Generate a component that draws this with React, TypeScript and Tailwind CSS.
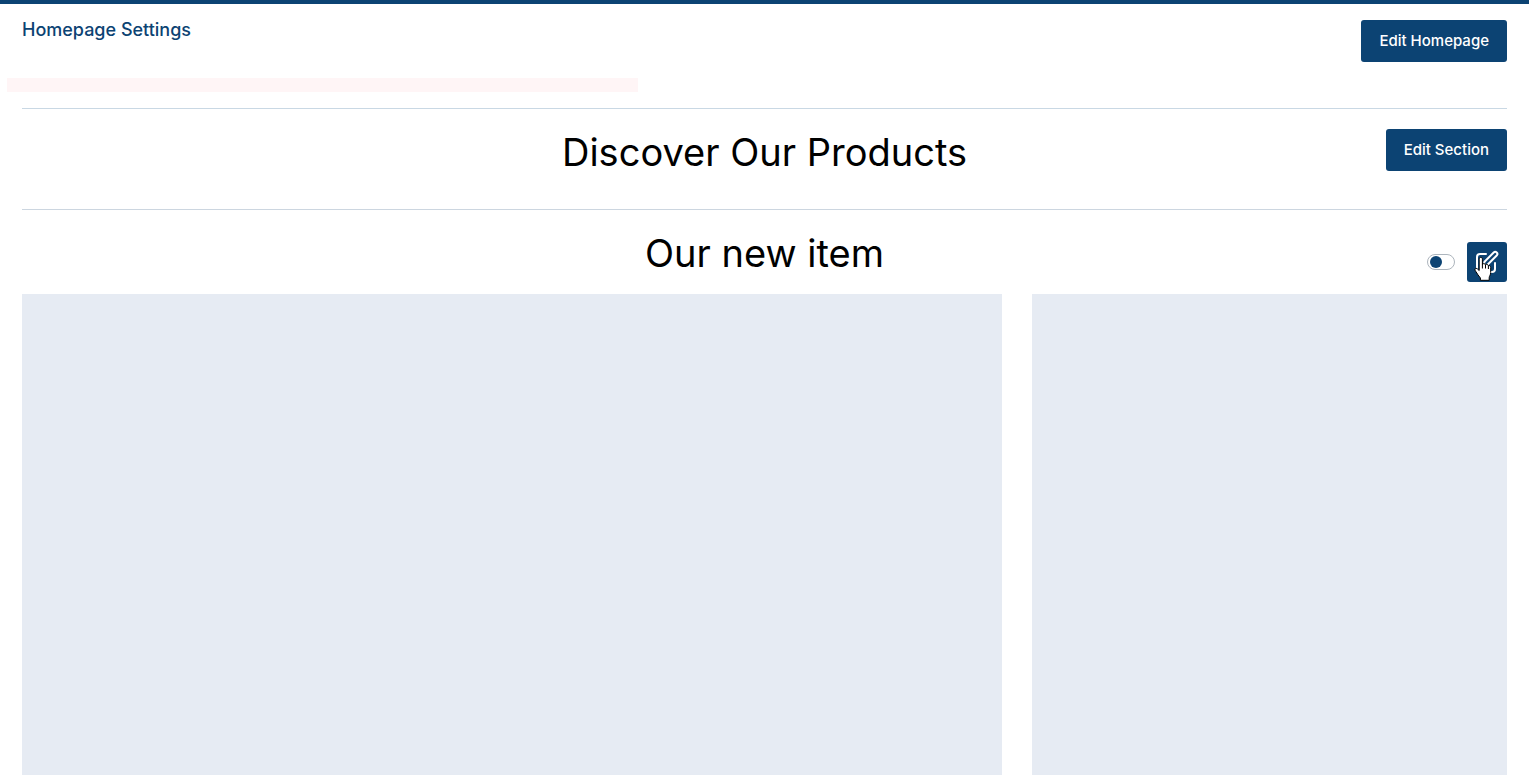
import React, { useState } from "react";

const PencilSquareIcon = () => (
  <svg
    className="size-6"
    viewBox="0 0 24 24"
    fill="none"
    stroke="currentColor"
    strokeWidth="2"
    strokeLinecap="round"
    strokeLinejoin="round"
    aria-hidden="true"
  >
    <path d="M11 4H5a3 3 0 0 0-3 3v12a3 3 0 0 0 3 3h12a3 3 0 0 0 3-3v-6" />
    <path d="M18.700 2.500a2.100 2.100 0 0 1 3 3L12.500 14.700 8.500 16l1-4.200z" />
  </svg>
);

const HandCursor = () => (
  <svg
    className="pointer-events-none absolute top-[14px] left-[6px] h-[26px] w-[20px]"
    viewBox="0 0 20 26"
    aria-hidden="true"
  >
    <path
      d="M6.200 3.200c0-2.400 3.200-2.400 3.200 0v5c.8-.9 2.900-.7 3.100.6 1-.7 2.700-.4 2.900 1 1.100-.5 2.300.1 2.300 1.700v5c0 2.500-1.500 3.500-1.500 5.200v2.600H7.400v-2.300c-1.900-1.800-3-4.400-4.700-6.700-1.500-1.900-.4-3.700 1.500-2.600l2 1.800z"
      fill="#fff"
      stroke="#000"
      strokeLinejoin="round"
    />
    <path d="M9.400 8v4.500M12.500 9v3.500M15.400 10v3" stroke="#000" fill="none" />
  </svg>
);

const EditButton = ({ children }: { children: React.ReactNode }) => (
  <button
    type="button"
    className="h-[42px] shrink-0 rounded-[3px] bg-[#0c4373] px-[18px] text-[15px] font-medium whitespace-nowrap text-white hover:bg-[#09355c]"
  >
    {children}
  </button>
);

export default function App() {
  const [enabled, setEnabled] = useState(false);

  return (
    <div className="flex min-h-screen flex-col border-t-4 border-[#0c4373] bg-white px-[22px] font-['Inter',sans-serif]">
      <header className="flex items-start justify-between pt-4">
        <h1 className="text-lg leading-5 font-medium text-[#0c4373]">Homepage Settings</h1>
        <EditButton>Edit Homepage</EditButton>
      </header>

      {/* empty message row */}
      <div className="-mx-[15px] mt-4 mb-4">
        <div className="h-[14px] w-5/12 bg-[#fff5f6]" />
      </div>

      <section className="grid grid-cols-[1fr_auto_1fr] items-start border-t border-[#c9d8e4] pt-5 pb-[34px]">
        <h2 className="col-start-2 text-[38px] leading-[46px] font-normal text-black">
          Discover Our Products
        </h2>
        <div className="flex justify-end">
          <EditButton>Edit Section</EditButton>
        </div>
      </section>

      <section className="flex flex-1 flex-col border-t border-[#ccd6e0] pt-5">
        <div className="grid grid-cols-[1fr_auto_1fr] items-start pb-3">
          <h2 className="col-start-2 text-[38px] leading-[46px] font-normal text-black">
            Our new item
          </h2>
          <div className="flex items-center justify-end gap-3 pt-3">
            <input
              type="checkbox"
              role="switch"
              aria-label="Show section"
              checked={enabled}
              onChange={(e) => setEnabled(e.target.checked)}
              className="flex h-4 w-7 appearance-none items-center rounded-full border border-[#adb5bd] bg-white px-[2px] before:size-3 before:rounded-full before:bg-[#0c4373] checked:justify-end"
            />
            <button
              type="button"
              aria-label="Edit section"
              className="relative flex size-10 items-center justify-center rounded-[3px] bg-[#0c4373] text-white"
            >
              <PencilSquareIcon />
              <HandCursor />
            </button>
          </div>
        </div>

        <div className="grid flex-1 grid-cols-3 gap-[30px]">
          <div className="col-span-2 bg-[#e6ebf3]" />
          <div className="bg-[#e6ebf3]" />
        </div>
      </section>
    </div>
  );
}
